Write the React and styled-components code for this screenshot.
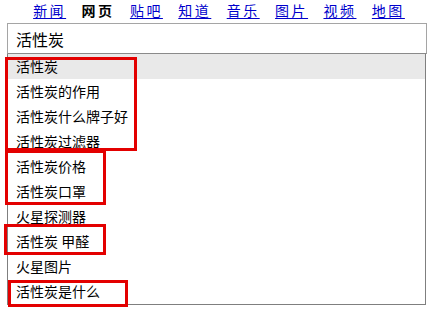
import React from "react";
import styled, { createGlobalStyle } from "styled-components";

const GlobalStyle = createGlobalStyle`
  html, body {
    margin: 0;
    padding: 0;
    background: #fff;
  }
  body {
    font-family: "Noto Sans CJK SC", "Liberation Sans", sans-serif;
  }
`;

const Page = styled.div`
  position: relative;
  width: 432px;
  height: 316px;
  overflow: hidden;
  background: #fff;
`;

const Nav = styled.div`
  display: flex;
  justify-content: center;
  gap: 15.4px;
  height: 23px;
  padding-left: 6px;
  font-size: 14px;
  line-height: 20px;
`;

const NavLink = styled.a`
  color: ${(p) => (p.$active ? "#000" : "#00c")};
  font-weight: ${(p) => (p.$active ? "bold" : "normal")};
  text-decoration: ${(p) => (p.$active ? "none" : "underline")};
  text-underline-offset: 2px;
  letter-spacing: 2.5px;
  cursor: pointer;
`;

const SearchBox = styled.div`
  display: flex;
  align-items: center;
  height: 29px;
  margin: 0 5px 0 7px;
  padding-left: 8px;
  border: 1px solid #a5a5a5;
  border-bottom-color: #8a8a8a;
  font-size: 16px;
  color: #000;
`;

const Suggestions = styled.ul`
  list-style: none;
  margin: 0 6px 0 7px;
  padding: 0;
  border: 1px solid #7f7f7f;
  border-top: none;
`;

const Suggestion = styled.li`
  display: flex;
  align-items: center;
  height: 25px;
  padding-left: 8px;
  padding-bottom: 2px;
  box-sizing: border-box;
  font-size: 14px;
  color: #000;
  background: ${(p) => (p.$selected ? "#e9e9e9" : "#fff")};
`;

const Mark = styled.div`
  position: absolute;
  box-sizing: border-box;
  border: 3px solid #e30000;
  pointer-events: none;
`;

const links = ["新闻", "网页", "贴吧", "知道", "音乐", "图片", "视频", "地图"];

const items = [
  "活性炭",
  "活性炭的作用",
  "活性炭什么牌子好",
  "活性炭过滤器",
  "活性炭价格",
  "活性炭口罩",
  "火星探测器",
  "活性炭 甲醛",
  "火星图片",
  "活性炭是什么",
];

// annotation boxes drawn over the list
const marks = [
  { left: 5, top: 57, width: 132, height: 94 },
  { left: 5, top: 150, width: 101, height: 55 },
  { left: 4, top: 224, width: 102, height: 31 },
  { left: 8, top: 280, width: 120, height: 27 },
];

const App = () => {
  return (
    <Page>
      <GlobalStyle />
      <Nav>
        {links.map((l) => (
          <NavLink key={l} $active={l === "网页"}>
            {l}
          </NavLink>
        ))}
      </Nav>
      <SearchBox>活性炭</SearchBox>
      <Suggestions>
        {items.map((t, i) => (
          <Suggestion key={t} $selected={i === 0}>
            {t}
          </Suggestion>
        ))}
      </Suggestions>
      {marks.map((m, i) => (
        <Mark key={i} style={m} />
      ))}
    </Page>
  );
};

export default App;
